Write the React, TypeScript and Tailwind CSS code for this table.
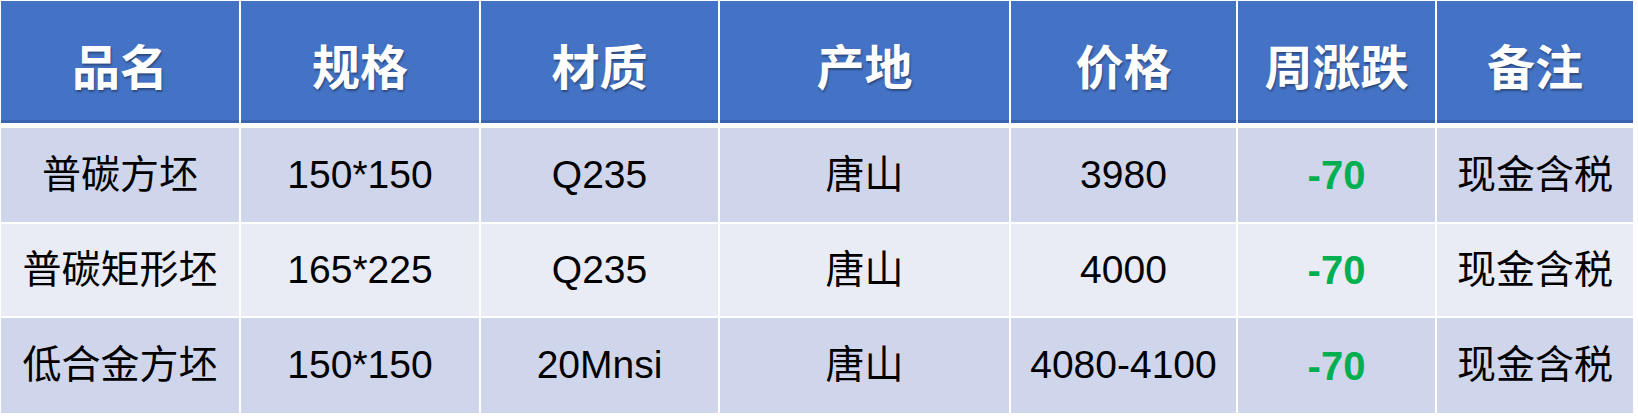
const cols = 'grid grid-cols-[238px_238px_237px_289px_225px_197px_196px] gap-x-[2px]'

const headers = ['品名', '规格', '材质', '产地', '价格', '周涨跌', '备注']

const rows = [
  { name: '普碳方坯', spec: '150*150', mat: 'Q235', place: '唐山', price: '3980', change: '-70', note: '现金含税' },
  { name: '普碳矩形坯', spec: '165*225', mat: 'Q235', place: '唐山', price: '4000', change: '-70', note: '现金含税' },
  { name: '低合金方坯', spec: '150*150', mat: '20Mnsi', place: '唐山', price: '4080-4100', change: '-70', note: '现金含税' },
]

const heights = ['h-[94px]', 'h-[92px]', 'h-[95px]']

export default function App() {
  return (
    <div className="w-[1638px] h-[416px] bg-white pl-[1px] pt-[1px] font-['Liberation_Sans','Noto_Sans_CJK_SC',sans-serif]">
      <div className="flex flex-col gap-[2px]">
        {/* header */}
        <div className={`${cols} h-[122px] mb-[3px]`}>
          {headers.map((h) => (
            <div
              key={h}
              className="bg-[#4472c4] border-b-[3px] border-[#3a63ae] flex items-center justify-center pt-[6px] text-white text-[48px] font-bold font-['Noto_Sans_CJK_SC',sans-serif] [text-shadow:1px_2px_2px_rgba(0,0,0,0.35)]"
            >
              {h}
            </div>
          ))}
        </div>

        {rows.map((r, i) => {
          const bg = i % 2 === 0 ? 'bg-[#cfd5ea]' : 'bg-[#e9ebf5]'
          const cell = `${bg} flex items-center justify-center text-[39px] text-black`
          return (
            <div key={i} className={`${cols} ${heights[i]}`}>
              <div className={cell}>{r.name}</div>
              <div className={cell}>{r.spec}</div>
              <div className={cell}>{r.mat}</div>
              <div className={cell}>{r.place}</div>
              <div className={cell}>{r.price}</div>
              <div className={`${bg} flex items-center justify-center text-[40px] font-bold text-[#00b050]`}>{r.change}</div>
              <div className={cell}>{r.note}</div>
            </div>
          )
        })}
      </div>
    </div>
  )
}
